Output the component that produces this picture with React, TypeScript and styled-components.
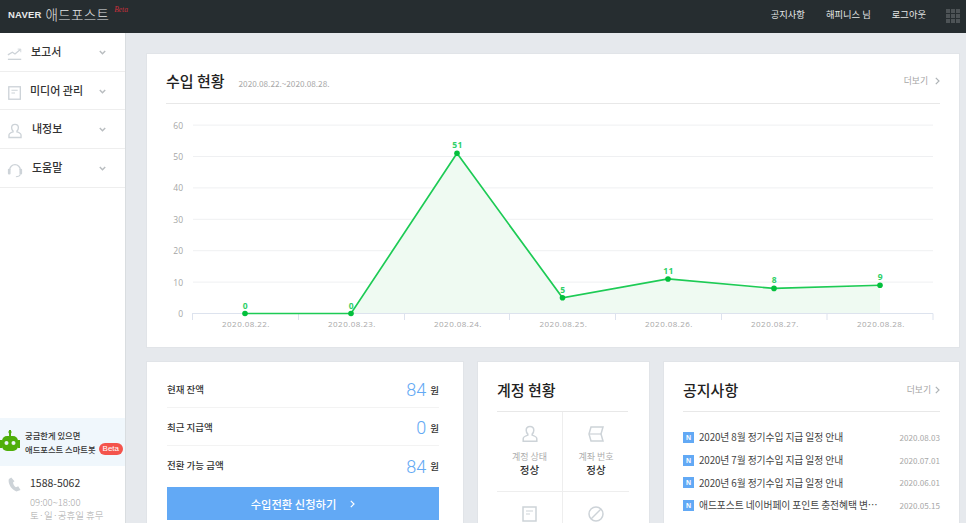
import { createGlobalStyle, styled } from "styled-components";

const FONT = `"Noto Sans CJK KR", "Noto Sans", sans-serif`;

const menus = [
  { label: "보고서", icon: "chart", labelLeft: 31 },
  { label: "미디어 관리", icon: "doc", labelLeft: 30 },
  { label: "내정보", icon: "user", labelLeft: 32 },
  { label: "도움말", icon: "headset", labelLeft: 32 },
];

const balances = [
  { label: "현재 잔액", value: "84" },
  { label: "최근 지급액", value: "0" },
  { label: "전환 가능 금액", value: "84" },
];

const notices = [
  { title: "2020년 8월 정기수입 지급 일정 안내", date: "2020.08.03" },
  { title: "2020년 7월 정기수입 지급 일정 안내", date: "2020.07.01" },
  { title: "2020년 6월 정기수입 지급 일정 안내", date: "2020.06.01" },
  { title: "애드포스트 네이버페이 포인트 충전혜택 변경 안내", date: "2020.05.15" },
];

const points = [
  { x: 245, v: 0, day: "2020.08.22." },
  { x: 351, v: 0, day: "2020.08.23." },
  { x: 457, v: 51, day: "2020.08.24." },
  { x: 562.5, v: 5, day: "2020.08.25." },
  { x: 668, v: 11, day: "2020.08.26." },
  { x: 774, v: 8, day: "2020.08.27." },
  { x: 880, v: 9, day: "2020.08.28." },
];

const Icon = ({ name, size = 18 }: { name: string; size?: number }) => {
  const common = {
    width: size,
    height: size,
    viewBox: "0 0 18 18",
    fill: "none",
    stroke: "#cdd3d8",
    strokeWidth: 1.5,
  };
  switch (name) {
    case "chart":
      return (
        <svg {...common}>
          <path d="M1 10l5-3 3 2 6-5" />
          <path d="M12 3.5h3.5V7" strokeWidth={1} />
          <path d="M1 15h15" />
        </svg>
      );
    case "doc":
      return (
        <svg {...common}>
          <rect x="2" y="2" width="13" height="14" />
          <path d="M5 6h7M5 9h4" strokeWidth={1.2} />
        </svg>
      );
    case "user":
      return (
        <svg {...common}>
          <path d="M9 1.5c2.4 0 3.8 1.8 3.8 3.8 0 1.7-.8 3-1.6 3.8v1c1.9.6 4.6 1.6 4.6 3.6v2.6H2.2v-2.6c0-2 2.7-3 4.6-3.6v-1C6 8.3 5.2 7 5.2 5.3c0-2 1.4-3.8 3.800-3.800z" />
        </svg>
      );
    case "headset":
      return (
        <svg {...common}>
          <path d="M3 9a6 6 0 0 1 12 0" />
          <rect x="1" y="7.500" width="3" height="6.500" rx="1.200" fill="#cdd3d8" stroke="none" />
          <rect x="14" y="7.500" width="3" height="6.500" rx="1.200" fill="#cdd3d8" stroke="none" />
          <path d="M15 14c-.5 1.500-2.500 2.500-5 2.500" strokeWidth={1.2} />
        </svg>
      );
    case "flag":
      return (
        <svg {...common}>
          <path d="M4 2h12l-2 7 2 7H4l-2-7z" />
          <path d="M2.500 9H14" strokeWidth={1.2} />
        </svg>
      );
    case "block":
      return (
        <svg {...common}>
          <circle cx="9" cy="9" r="7" />
          <path d="M4 14L14 4" />
        </svg>
      );
    default:
      return null;
  }
};

const Chevron = ({ color = "#aeb3b6" }: { color?: string }) => (
  <svg width="5" height="8" viewBox="0 0 5 8" fill="none" stroke={color} strokeWidth="1.200">
    <path d="M.8.800L4 4 .8 7.200" />
  </svg>
);

const MenuArrow = styled(({ className }: { className?: string }) => (
  <svg className={className} width="7" height="5" viewBox="0 0 7 5" fill="none" stroke="#b9bdc0" strokeWidth="1.500">
    <path d="M.8 1l2.700 2.700L6.200 1" />
  </svg>
))`
  margin-top: 3px;
`;

const Bot = () => (
  <svg width="20" height="24" viewBox="0 0 20 24">
    <rect x="9" y="0" width="2" height="6" fill="#4fae0a" />
    <circle cx="10" cy="2" r="1.600" fill="#4fae0a" />
    <rect x="0" y="10" width="2.500" height="8" fill="#4fae0a" />
    <rect x="17.500" y="10" width="2.500" height="8" fill="#4fae0a" />
    <rect x="2" y="6" width="16" height="15" rx="5" fill="#4fae0a" />
    <circle cx="6.500" cy="13" r="2" fill="#eaf5f9" />
    <circle cx="13.500" cy="13" r="2" fill="#eaf5f9" />
  </svg>
);

const Phone = () => (
  <svg width="13" height="15" viewBox="0 0 14 16">
    <path
      d="M3.500.500L1 2C-.5 6 3 13.500 9 15.500l4.500-1.500-2.500-4-2.500 1C6.500 9.500 5.500 7.500 5.500 5.500l1.500-1z"
      fill="#cdd3d8"
    />
  </svg>
);

const Chart = () => {
  const y = (v: number) => 313.5 - v * 3.14;
  const line = points.map((p) => `${p.x},${y(p.v)}`).join(" ");
  return (
    <ChartSvg width="812" height="244" viewBox="147 104 812 244">
      {[10, 20, 30, 40, 50, 60].map((v) => (
        <line key={v} x1="193" x2="933" y1={y(v)} y2={y(v)} stroke="#eff0f2" strokeWidth="1" />
      ))}
      {[0, 10, 20, 30, 40, 50, 60].map((v) => (
        <text key={v} x="183" y={y(v) + 3.500} textAnchor="end" fontSize="8.500" fill="#a6a6a6">
          {v}
        </text>
      ))}
      <polygon points={`245,313.5 ${line} 880,313.5`} fill="#effaf2" />
      <line x1="192" x2="933" y1="313.5" y2="313.5" stroke="#dde3ee" />
      {[192.500, 298.500, 404.500, 509.500, 615.500, 721.500, 827, 933].map((x) => (
        <line key={x} x1={x} x2={x} y1="313.5" y2="320" stroke="#dde3ee" />
      ))}
      <polyline points={line} fill="none" stroke="#1dcb55" strokeWidth="1.700" />
      {points.map((p) => (
        <g key={p.x}>
          <circle cx={p.x} cy={y(p.v)} r="2.800" fill="#03c03c" />
          <text
            x={p.x + 0.5}
            y={y(p.v) - 5}
            textAnchor="middle"
            fontSize="8.500"
            fontWeight="700"
            letterSpacing="0.500"
            fill="#2fd067"
          >
            {p.v}
          </text>
          <text x={p.x + 1} y="327" textAnchor="middle" fontSize="8" letterSpacing="0.450" fill="#a8a8a8">
            {p.day}
          </text>
        </g>
      ))}
    </ChartSvg>
  );
};

const App = () => {
  return (
    <>
      <GlobalStyle />
      <Page>
        <Header>
          <Brand>
            <Naver>NAVER</Naver>
            <ServiceName>애드포스트</ServiceName>
            <BetaMark>Beta</BetaMark>
          </Brand>
          <TopNav>
            <TopLink>공지사항</TopLink>
            <TopLink>해피니스 님</TopLink>
            <TopLink>로그아웃</TopLink>
            <AppGrid>
              {Array.from({ length: 9 }).map((_, i) => (
                <i key={i} />
              ))}
            </AppGrid>
          </TopNav>
        </Header>
        <Body>
          <Sidebar>
            <nav>
              {menus.map((menu) => (
                <MenuItem key={menu.label}>
                  <MenuIcon>
                    <Icon name={menu.icon} size={16} />
                  </MenuIcon>
                  <MenuLabel $left={menu.labelLeft}>{menu.label}</MenuLabel>
                  <MenuArrow />
                </MenuItem>
              ))}
            </nav>
            <SideBottom>
              <BotBanner>
                <Bot />
                <BotText>
                  <div>궁금한게 있으면</div>
                  <BotLine>
                    애드포스트 스마트봇 <BetaPill>Beta</BetaPill>
                  </BotLine>
                </BotText>
              </BotBanner>
              <Contact>
                <Phone />
                <div>
                  <PhoneNumber>1588-5062</PhoneNumber>
                  <Hours>09:00~18:00</Hours>
                  <Hours>토·일·공휴일 휴무</Hours>
                </div>
              </Contact>
            </SideBottom>
          </Sidebar>
          <Main>
            <RevenueCard>
              <CardHead>
                <TitleGroup>
                  <CardTitle>수입 현황</CardTitle>
                  <Period>2020.08.22.~2020.08.28.</Period>
                </TitleGroup>
                <More $gap={7}>
                  더보기 <Chevron />
                </More>
              </CardHead>
              <Chart />
            </RevenueCard>
            <BottomRow>
              <BalanceCard>
                {balances.map((b) => (
                  <BalanceRow key={b.label}>
                    <BalanceLabel>{b.label}</BalanceLabel>
                    <BalanceValue>
                      <b>{b.value}</b> 원
                    </BalanceValue>
                  </BalanceRow>
                ))}
                <ConvertButton>
                  수입전환 신청하기
                  <Chevron color="#ffffff" />
                </ConvertButton>
              </BalanceCard>
              <AccountCard>
                <SmallHead>
                  <CardTitle>계정 현황</CardTitle>
                </SmallHead>
                <AccountGrid>
                  <AccountCell>
                    <Icon name="user" />
                    <AccountLabel>계정 상태</AccountLabel>
                    <AccountValue>정상</AccountValue>
                  </AccountCell>
                  <AccountCell>
                    <Icon name="flag" />
                    <AccountLabel>계좌 번호</AccountLabel>
                    <AccountValue>정상</AccountValue>
                  </AccountCell>
                  <AccountCell>
                    <Icon name="doc" />
                  </AccountCell>
                  <AccountCell>
                    <Icon name="block" />
                  </AccountCell>
                </AccountGrid>
              </AccountCard>
              <NoticeCard>
                <SmallHead>
                  <CardTitle>공지사항</CardTitle>
                  <More $gap={4}>
                    더보기 <Chevron />
                  </More>
                </SmallHead>
                <NoticeList>
                  {notices.map((n) => (
                    <NoticeRow key={n.date}>
                      <NBadge>N</NBadge>
                      <NoticeTitle>{n.title}</NoticeTitle>
                      <NoticeDate>{n.date}</NoticeDate>
                    </NoticeRow>
                  ))}
                </NoticeList>
              </NoticeCard>
            </BottomRow>
          </Main>
        </Body>
      </Page>
    </>
  );
};

const GlobalStyle = createGlobalStyle`
  html, body {
    margin: 0;
    height: 523px;
    overflow: hidden;
    font-family: ${FONT};
    color: #222222;
  }
  * {
    box-sizing: border-box;
  }
`;

const Page = styled.div`
  width: 966px;
  height: 523px;
  display: flex;
  flex-direction: column;
  overflow: hidden;
  background-color: #e6e9ed;
`;

const Header = styled.header`
  flex: none;
  height: 33px;
  display: flex;
  align-items: center;
  justify-content: space-between;
  padding: 0 6px 5px 8px;
  background-color: #262d30;
  color: #ffffff;
`;

const Brand = styled.div`
  display: flex;
  align-items: center;
`;

const Naver = styled.span`
  font-family: "Liberation Sans", sans-serif;
  font-size: 9.500px;
  font-weight: 700;
  letter-spacing: 0.200px;
  color: #e8eaea;
`;

const ServiceName = styled.span`
  margin-left: 4px;
  font-size: 13.500px;
  font-weight: 300;
  letter-spacing: 0.300px;
  color: #e3e5e6;
`;

const BetaMark = styled.span`
  position: relative;
  top: -5px;
  margin-left: 5px;
  font-family: "Liberation Serif", serif;
  font-size: 7.500px;
  font-style: italic;
  color: #c9303c;
`;

const TopNav = styled.div`
  display: flex;
  align-items: center;
`;

const TopLink = styled.span`
  margin-left: 21px;
  font-size: 9.300px;
  color: #e4e6e6;
`;

const AppGrid = styled.div`
  margin: 4px 0 0 20px;
  width: 14px;
  display: grid;
  grid-template-columns: repeat(3, 4px);
  gap: 1px;
  i {
    height: 4px;
    background-color: #4d5356;
  }
`;

const Body = styled.div`
  flex: 1;
  min-height: 0;
  display: flex;
`;

const Sidebar = styled.aside`
  flex: none;
  width: 126px;
  display: flex;
  flex-direction: column;
  justify-content: space-between;
  background-color: #ffffff;
  border-right: 1px solid #d9dde0;
`;

const MenuItem = styled.div`
  height: 38.700px;
  display: flex;
  align-items: center;
  padding: 0 19px 2px 7px;
  border-bottom: 1px solid #eeeeee;
`;

const MenuIcon = styled.span`
  flex: none;
  width: 17px;
  height: 16px;
`;

const MenuLabel = styled.span<{ $left: number }>`
  flex: 1;
  margin-left: ${(p) => p.$left - 24}px;
  font-size: 11px;
  font-weight: 500;
  color: #333333;
`;

const SideBottom = styled.div`
  display: flex;
  flex-direction: column;
`;

const BotBanner = styled.div`
  height: 48px;
  display: flex;
  align-items: center;
  gap: 5px;
  background-color: #f0f7fc;
`;

const BotText = styled.div`
  font-size: 8.300px;
  line-height: 14px;
  font-weight: 500;
  color: #333333;
`;

const BotLine = styled.div`
  display: flex;
  align-items: center;
  gap: 3px;
  white-space: nowrap;
`;

const BetaPill = styled.span`
  padding: 1px 4px;
  border-radius: 6px;
  font-family: "Liberation Sans", sans-serif;
  font-size: 8px;
  line-height: 10px;
  color: #ffffff;
  background-color: #f4544c;
`;

const Contact = styled.div`
  height: 57px;
  display: flex;
  gap: 9px;
  padding: 9px 0 0 8px;
  svg {
    flex: none;
    margin-top: 2px;
  }
`;

const PhoneNumber = styled.div`
  margin-bottom: 5px;
  font-size: 10.500px;
  line-height: 16px;
  color: #333333;
`;

const Hours = styled.div`
  font-size: 9.500px;
  line-height: 13px;
  color: #a9a9a9;
  white-space: nowrap;
  font-weight: 300;
`;

const Main = styled.main`
  flex: 1;
  min-width: 0;
  padding: 21px 7px 0 21px;
`;

const Card = styled.section`
  background-color: #ffffff;
  box-shadow: 0 0 0 1px #e1e4e8;
`;

const RevenueCard = styled(Card)`
  height: 293px;
  padding: 0;
`;

const CardHead = styled.div`
  height: 50px;
  margin: 0 19px;
  padding-top: 4px;
  display: flex;
  align-items: center;
  justify-content: space-between;
  border-bottom: 1px solid #e8e8e8;
`;

const TitleGroup = styled.div`
  display: flex;
  align-items: baseline;
  gap: 14px;
`;

const CardTitle = styled.h2`
  margin: 0;
  font-size: 15px;
  font-weight: 500;
  color: #222222;
`;

const Period = styled.span`
  font-size: 8.200px;
  color: #a8a8a8;
`;

const More = styled.span<{ $gap: number }>`
  display: flex;
  align-items: center;
  gap: ${(p) => p.$gap}px;
  font-size: 8.800px;
  color: #a5a5a5;
`;

const ChartSvg = styled.svg`
  display: block;
  font-family: "Open Sans", sans-serif;
`;

const BottomRow = styled.div`
  margin-top: 15px;
  display: grid;
  grid-template-columns: 316px 171px 295px;
  gap: 15px;
  align-items: start;
`;

const BalanceCard = styled(Card)`
  height: 200px;
  padding: 8px 24px 0 20px;
`;

const BalanceRow = styled.div`
  height: 38px;
  display: flex;
  align-items: center;
  justify-content: space-between;
  border-bottom: 1px solid #f3f3f3;
  &:nth-of-type(3) {
    border-bottom: none;
  }
`;

const BalanceLabel = styled.span`
  font-size: 9.500px;
  font-weight: 500;
  color: #333333;
`;

const BalanceValue = styled.span`
  display: flex;
  align-items: center;
  gap: 4px;
  padding-top: 2px;
  font-size: 9.500px;
  font-weight: 500;
  color: #333333;
  b {
    font-family: Roboto, sans-serif;
    font-size: 18px;
    font-weight: 300;
    color: #63a9f4;
  }
`;

const ConvertButton = styled.button`
  width: 100%;
  height: 33px;
  display: flex;
  align-items: center;
  justify-content: center;
  gap: 14px;
  margin-top: 3px;
  border: none;
  font-family: ${FONT};
  font-size: 11.300px;
  font-weight: 500;
  color: #ffffff;
  background-color: #62a9f5;
`;

const AccountCard = styled(Card)`
  height: 200px;
  padding: 0 21px 0 19px;
`;

const SmallHead = styled.div`
  height: 50px;
  padding-top: 6px;
  display: flex;
  align-items: center;
  justify-content: space-between;
  border-bottom: 1px solid #e8e8e8;
`;

const AccountGrid = styled.div`
  display: grid;
  grid-template-columns: 66px 66px;
  grid-auto-rows: 80px;
`;

const AccountCell = styled.div`
  display: flex;
  flex-direction: column;
  align-items: center;
  padding-top: 13px;
  border-bottom: 1px solid #eeeeee;
  &:nth-child(odd) {
    border-right: 1px solid #eeeeee;
  }
`;

const AccountLabel = styled.span`
  margin-top: 7px;
  font-size: 9px;
  line-height: 13px;
  color: #adadad;
`;

const AccountValue = styled.span`
  font-size: 10.500px;
  line-height: 14px;
  font-weight: 500;
  color: #333333;
`;

const NoticeCard = styled(Card)`
  height: 200px;
  padding: 0 19px;
`;

const NoticeList = styled.ul`
  margin: 0;
  padding: 14px 0 0;
  list-style: none;
`;

const NoticeRow = styled.li`
  height: 22.700px;
  display: flex;
  align-items: center;
`;

const NBadge = styled.span`
  flex: none;
  width: 11px;
  height: 11px;
  display: flex;
  align-items: center;
  justify-content: center;
  font-family: "Liberation Sans", sans-serif;
  font-size: 7px;
  font-weight: 700;
  color: #ffffff;
  background-color: #62a9f5;
`;

const NoticeTitle = styled.span`
  width: 181px;
  margin-left: 5px;
  overflow: hidden;
  white-space: nowrap;
  text-overflow: ellipsis;
  font-size: 9.800px;
  letter-spacing: -0.100px;
  color: #444444;
`;

const NoticeDate = styled.span`
  margin-left: auto;
  font-size: 8.100px;
  color: #a8a8a8;
`;

export default App;
